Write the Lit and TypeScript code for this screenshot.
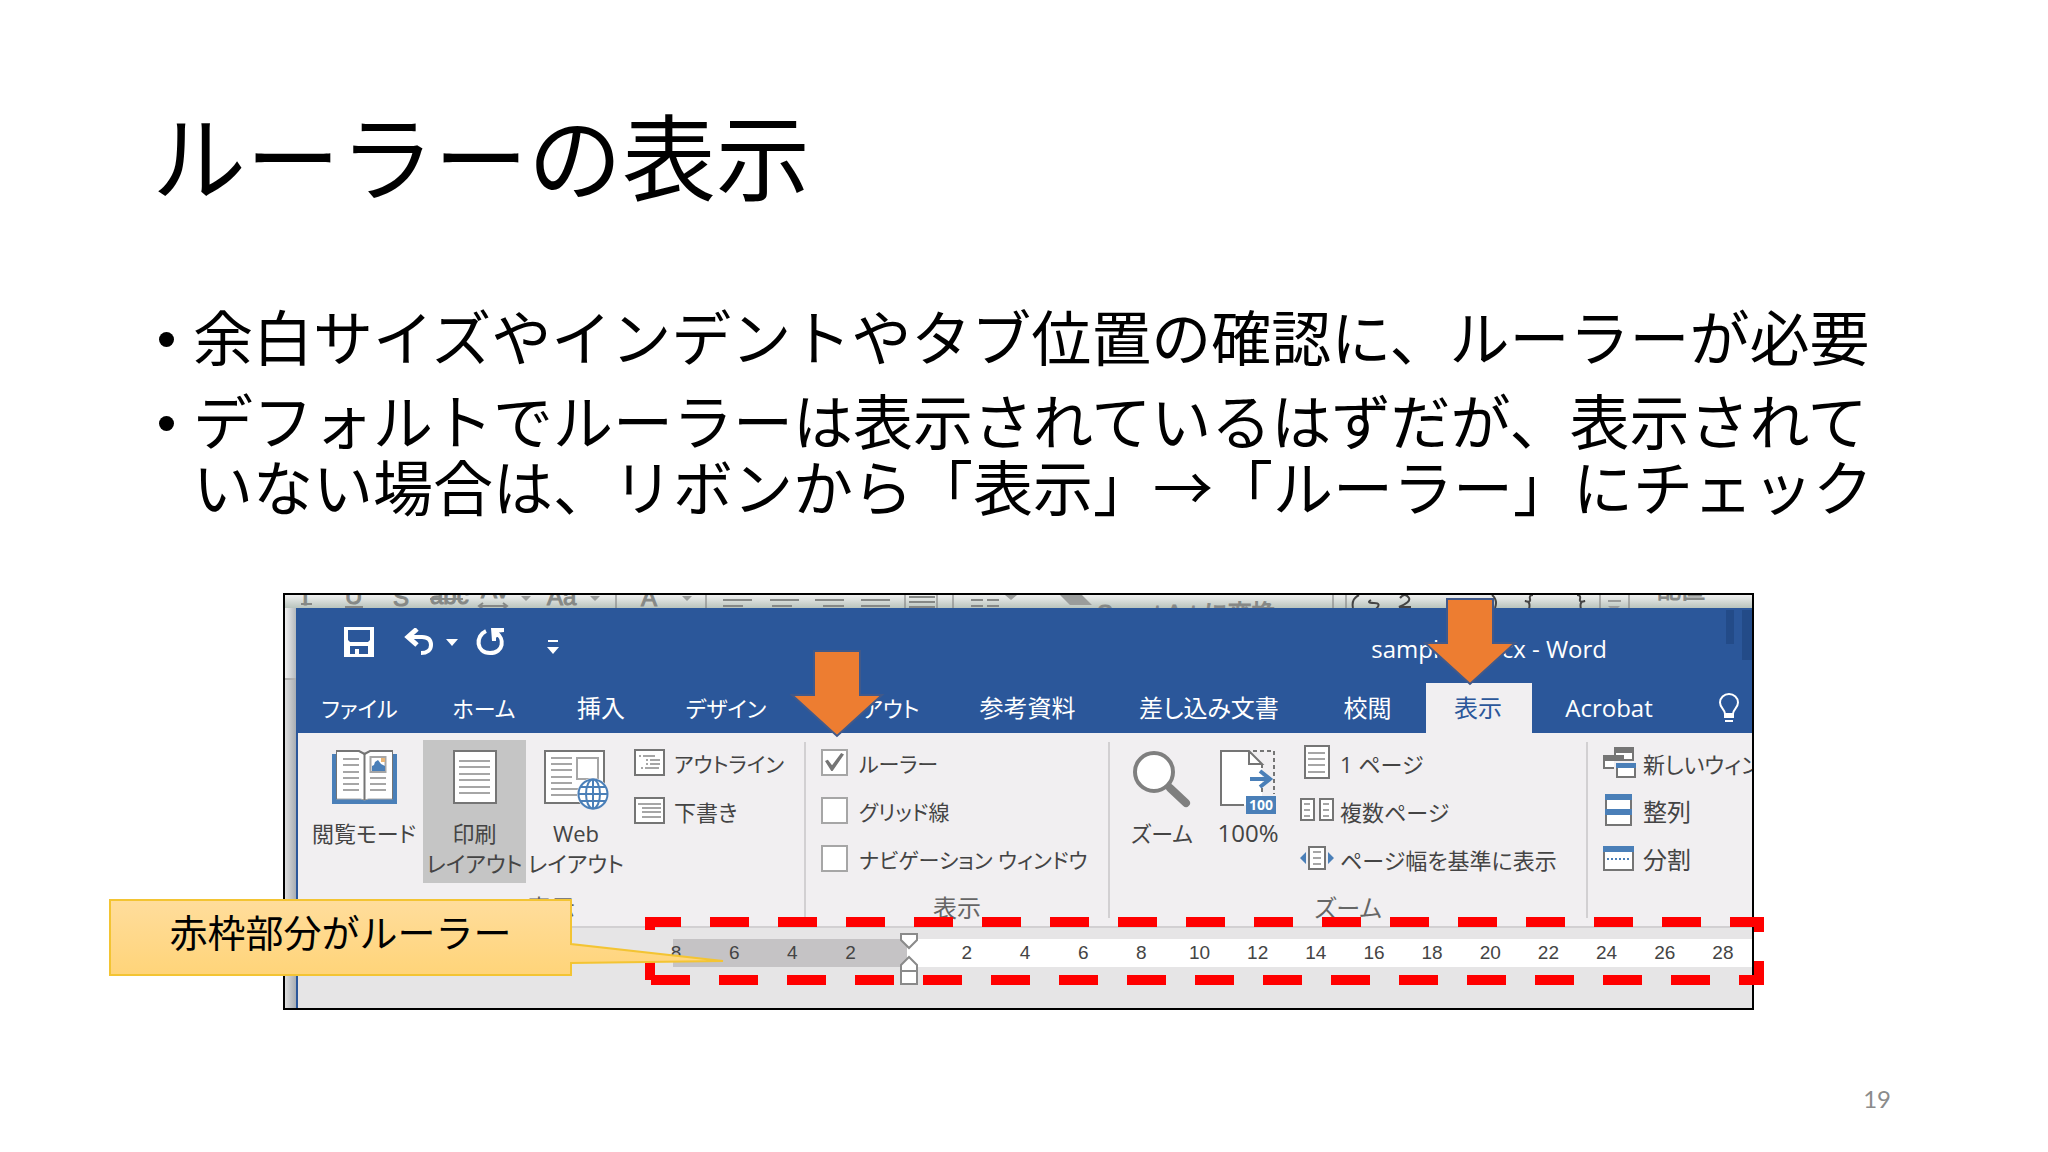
import { LitElement, html, svg, css } from "lit";
import { customElement, property } from "lit/decorators.js";
import { classMap } from "lit/directives/class-map.js";

const G = "#757575";
const L = "#a6a6a6";
const B = "#4a7fb8";

const lines = (x: number, w: number, ys: number[], c = L) =>
  svg`${ys.map((y) => svg`<rect x=${x} y=${y} width=${w} height="2" fill=${c}></rect>`)}`;

const icons: Record<string, unknown> = {
  save: html`<svg width="30" height="30" viewBox="0 0 30 30">
    <path fill="#fff" fill-rule="evenodd" d="M0 0h30v30H0zM4 3v10l2 2h18l2-2V3zM6 19v8h5v-5h4v5h9v-8z"></path></svg>`,
  undo: html`<svg width="30" height="28" viewBox="0 0 30 28">
    <path fill="none" stroke="#fff" stroke-width="4" d="M4 9H18C25 9 27 13 27 17C27 22 23 25 17 25"></path>
    <path fill="none" stroke="#fff" stroke-width="5" d="M13 1L4 9L13 17"></path></svg>`,
  redo: html`<svg width="30" height="28" viewBox="0 0 30 28">
    <path fill="none" stroke="#fff" stroke-width="4" d="M10 3C-1 8 0 25 14 25C28 25 29 10 20 5"></path>
    <path fill="#fff" d="M15 0H28V4L23 4.500L25 8L20 9.500V13H16Z"></path></svg>`,
  caret: html`<svg width="12" height="7" viewBox="0 0 12 7"><path fill="#fff" d="M0 0h12L6 7z"></path></svg>`,
  more: html`<svg width="12" height="14" viewBox="0 0 12 14"><path fill="#fff" d="M1 0h10v2H1zM0 7h12L6 14z"></path></svg>`,
  bulb: html`<svg width="22" height="30" viewBox="0 0 22 30">
    <path fill="none" stroke="#fff" stroke-width="2" d="M7 21C7 16 2 15 2 9.500A9 8.500 0 0 1 20 9.500C20 15 15 16 15 21Z"></path>
    <path fill="#fff" d="M6 22h10v3H6zM7 27h8v2H7z"></path></svg>`,
  book: html`<svg width="65" height="54" viewBox="0 0 65 54">
    <path fill=${B} d="M0 4h65v50H0z"></path>
    <path fill="#fff" stroke=${L} stroke-width="1" d="M4.500 1h23l5 3l5-3h23v48h-24l-4 1l-4-1h-24z"></path>
    <path fill="none" stroke=${G} stroke-width="2" d="M4 1h23l5.500 3l5.500-3h23"></path>
    <path stroke=${G} stroke-width="2" d="M32.500 4v46"></path>
    <path stroke=${G} stroke-width="1" d="M4.500 1v48M60.500 1v48"></path>
    ${lines(11, 16, [8, 14, 21, 27, 33, 39])}${lines(38, 16, [27, 33, 39])}
    <rect x="38.500" y="7" width="15" height="15" fill="#fff" stroke=${L} stroke-width="2"></rect>
    <path fill=${B} d="M40 21v-5l2 -1l1-3l3-2l3 4l4 2v5z"></path><rect x="49" y="8" width="4" height="4" fill="#eab676"></rect></svg>`,
  print: html`<svg width="44" height="54" viewBox="0 0 44 54">
    <rect x="1" y="1" width="42" height="52" fill="#fff" stroke=${G} stroke-width="2"></rect>
    ${lines(6, 31, [10, 16, 23, 29, 36, 42])}</svg>`,
  web: html`<svg width="65" height="60" viewBox="0 0 65 60">
    <rect x="1" y="1" width="59" height="52" fill="#fff" stroke=${G} stroke-width="2"></rect>
    ${lines(7, 21, [7, 13, 19, 26, 32])}${lines(7, 27, [38, 44])}
    <rect x="33" y="8" width="21" height="21" fill="#fff" stroke=${L} stroke-width="2"></rect>
    <circle cx="49" cy="44" r="16" fill="#f1eff1"></circle>
    <g fill="#fff" stroke=${B} stroke-width="2"><circle cx="49" cy="44" r="14.500"></circle>
    <ellipse cx="49" cy="44" rx="7" ry="14.500"></ellipse>
    <path d="M34.500 44H63.500M37 37H61M37 51H61M49 29.500V58.500"></path></g></svg>`,
  outline: html`<svg width="31" height="27" viewBox="0 0 31 27">
    <rect x="1" y="1" width="29" height="25" fill="#fff" stroke=${G} stroke-width="2"></rect>
    <path fill=${L} d="M5 6h2v2H5zM9 6h12v2H9zM12 10h2v2h-2zM16 10h10v2H16zM12 14h2v2h-2zM16 14h10v2H16zM7 18h2v2H7zM11 18h14v2H11z"></path></svg>`,
  draft: html`<svg width="31" height="27" viewBox="0 0 31 27">
    <rect x="1" y="1" width="29" height="25" fill="#fff" stroke=${G} stroke-width="2"></rect>
    ${lines(4, 23, [6])}${lines(8, 19, [10, 14, 19])}</svg>`,
  zoom: html`<svg width="58" height="58" viewBox="0 0 58 58">
    <path stroke="#7f7f7f" stroke-width="8" stroke-linecap="round" d="M37 38L53 53"></path>
    <circle cx="21" cy="22" r="19" fill="#fff" stroke="#7f7f7f" stroke-width="4"></circle></svg>`,
  hundred: html`<svg width="56" height="64" viewBox="0 0 56 64">
    <path fill="#fff" d="M1 1H29L42 14V55H1Z"></path>
    <path fill="none" stroke=${G} stroke-width="2" d="M24 55H1V1H29L42 14H29V1M42 14V18"></path>
    <path fill="none" stroke=${G} stroke-width="2" stroke-dasharray="4 3" d="M33 1H54V44M42 38V44"></path>
    <path fill="none" stroke=${B} stroke-width="4" d="M30 29H50M40 21L50 29L40 37"></path>
    <rect x="26" y="46" width="30" height="18" fill=${B}></rect>
    <text x="41" y="60" class="badge" text-anchor="middle">100</text></svg>`,
  one: html`<svg width="34" height="34" viewBox="0 0 34 34">
    <rect x="5" y="1" width="24" height="32" fill="#fff" stroke=${G} stroke-width="2"></rect>
    ${lines(8, 17, [7, 13, 19, 26])}</svg>`,
  multi: html`<svg width="34" height="24" viewBox="0 0 34 24">
    <g fill="#fff" stroke=${G} stroke-width="2"><rect x="1" y="1" width="13" height="21"></rect><rect x="20" y="1" width="13" height="21"></rect></g>
    ${lines(4, 6, [5, 11, 17])}${lines(23, 6, [5, 11, 17])}</svg>`,
  pagew: html`<svg width="34" height="24" viewBox="0 0 34 24">
    <rect x="9" y="1" width="16" height="22" fill="#fff" stroke=${G} stroke-width="2"></rect>
    ${lines(13, 8, [5, 11, 17])}<path fill=${B} d="M0 12l6-6v12zM34 12l-6-6v12z"></path></svg>`,
  newwin: html`<svg width="34" height="32" viewBox="0 0 34 32">
    <path fill="#fff" stroke=${G} stroke-width="2" d="M12 2h18v12H12z"></path><path fill=${G} d="M11 1h20v6H11z"></path>
    <path fill="#fff" stroke=${G} stroke-width="2" d="M1 11h19v11H1z"></path><path fill=${G} d="M0 9h21v6H0z"></path>
    <path fill="#f1eff1" d="M11 15h23v17H11z"></path><path fill="#fff" stroke=${G} stroke-width="2" d="M14 18h18v13H14z"></path>
    <path fill=${B} d="M13 17h20v5H13z"></path></svg>`,
  tile: html`<svg width="30" height="32" viewBox="0 0 30 32">
    <path fill="#fff" stroke=${G} stroke-width="2" d="M3 1h25v30H3z"></path>
    <path fill=${B} d="M2 0h27v6H2zM2 15h27v6H2z"></path></svg>`,
  split: html`<svg width="31" height="25" viewBox="0 0 31 25">
    <path fill="#fff" stroke=${G} stroke-width="2" d="M1 1h29v23H1z"></path><path fill=${B} d="M0 0h31v6H0z"></path>
    <path stroke=${B} stroke-width="2" stroke-dasharray="2 2" d="M4 13H28"></path></svg>`,
};

const base = css`
  * { box-sizing: border-box; }
  svg { display: block; flex: none; }
  button { font: inherit; color: inherit; background: none; border: 0; padding: 0; margin: 0; text-align: center; white-space: nowrap; }
  .badge { font: bold 14px "Open Sans", sans-serif; fill: #fff; }
`;

@customElement("big-button")
class BigButton extends LitElement {
  @property() icon = "";
  @property({ type: Array }) text: string[] = [];
  @property({ type: Boolean }) pressed = false;
  static styles = [base, css`
    :host { display: block; height: 143px; }
    .big { display: flex; flex-direction: column; align-items: center; width: 100%; height: 100%; line-height: 30px; }
    .pressed { background: #c5c5c5; }
    .pic { display: flex; justify-content: center; height: 78px; padding-top: 10px; }
    .row { height: 30px; }
  `];
  render() {
    return html`<button class=${classMap({ big: true, pressed: this.pressed })} aria-pressed=${this.pressed}>
      <span class="pic">${icons[this.icon]}</span>${this.text.map((t) => html`<span class="row">${t}</span>`)}</button>`;
  }
}

@customElement("small-button")
class SmallButton extends LitElement {
  @property() icon = "";
  @property() text = "";
  static styles = [base, css`
    :host { display: block; }
    .small { display: flex; align-items: center; gap: 6px; height: 48px; line-height: 48px; }
    .pic { display: flex; width: 34px; flex: none; padding-bottom: 4px; }
  `];
  render() {
    return html`<button class="small"><span class="pic">${icons[this.icon]}</span><span>${this.text}</span></button>`;
  }
}

@customElement("word-window")
class WordWindow extends LitElement {
  static styles = [base, css`
    :host {
      display: block; overflow: hidden; border: 2px solid #000; background: #cfcfcf; color: #444;
      font: 22px/30px "Noto Sans", "Noto Sans CJK JP", sans-serif;
    }
    .ui { font-family: "Open Sans", "Noto Sans CJK JP", sans-serif; font-feature-settings: "palt"; }
    .behind { height: 13px; overflow: hidden; background: linear-gradient(#f0f0f0, #b9c4bd); }
    .behind text { font: 24px "Liberation Sans", "Noto Sans CJK JP", sans-serif; fill: #858886; stroke: #858886; stroke-width: 1px; }
    .body { display: flex; }
    .edge { width: 11px; flex: none; background: linear-gradient(90deg, #dedede, #a8adb3); }
    .edge-top { height: 72px; background: linear-gradient(90deg, #f0f0f0, #b4b9bd); border-bottom: 2px solid #b0b0b0; }
    .win { flex: 1; min-width: 0; border-left: 2px solid #2b579a; background: #e6e5e6; }
    .titlebar { display: flex; height: 75px; background: #2b579a; color: #fff; }
    .quick { display: flex; align-items: center; height: 68px; padding-left: 46px; }
    .quick button { display: block; }
    .undo { margin-left: 30px; }
    .caret { margin-left: 12px; }
    .redo { margin-left: 18px; }
    .more { margin: 10px 0 0 41px; }
    .doc { margin: 0 118px 0 auto; font-size: 24px; line-height: 82px; white-space: nowrap; }
    .tabs { display: grid; grid-template-columns: 125px 124px 110px 140px 151px 161px 202px 115px 106px 156px 1fr;
      height: 50px; background: #2b579a; color: #fff; line-height: 46px; font-size: 24px; }
    .tabs button { padding-right: 2px; }
    .tabs .kana { font-size: 22px; }
    .tabs .active { background: #f1eff1; color: #2b579a; }
    .tabs .tell { display: flex; align-items: center; padding-left: 30px; }
    .ribbon { display: flex; background: #f1eff1; border-bottom: 2px solid #d2d0d2; }
    .sep { width: 2px; flex: none; margin: 9px 0 8px; background: #d2d0d2; }
    .group { flex: none; padding-top: 7px; }
    .items { display: flex; height: 150px; }
    .name { margin: 0; line-height: 36px; text-align: center; font-size: 24px; color: #666; }
    .views { width: 506px; }
    .views .items { padding-left: 7px; }
    .show { width: 302px; }
    .show .items { padding-left: 15px; }
    .zoom { width: 476px; }
    .zoom .items { padding-left: 10px; }
    .arrange { flex: 1; min-width: 0; }
    .arrange .items { padding-left: 15px; }
    .w118 { width: 118px; } .w103 { width: 103px; } .w100 { width: 100px; } .w88 { width: 88px; } .w84 { width: 84px; }
    .kanji { font-size: 24px; }
    .narrow { font-size: 21px; }
    .col { margin-left: 8px; }
    .check { display: flex; align-items: center; gap: 11px; height: 48px; white-space: nowrap; font-size: 21px; }
    .check input { appearance: none; display: grid; place-items: center; width: 27px; height: 27px; margin: 0 0 4px; flex: none; background: #fff; border: 2px solid #a6a6a6; }
    .check input:checked::after { content: ""; width: 19px; height: 18px; background: #757575; clip-path: polygon(0 45%, 15% 38%, 37% 68%, 85% 0, 100% 8%, 40% 100%, 33% 100%); }
    .ruler { display: grid; grid-template-rows: 28px; padding-top: 11px; height: 80px; }
    .track { grid-area: 1 / 1; margin-left: 375px; background: linear-gradient(90deg, #c5c3c5 234px, #fff 234px); }
    .marks { grid-area: 1 / 1; margin-left: 349px; display: flex; font: 19px/28px "Liberation Sans", sans-serif; }
    .marks span { flex: 1 1 0; min-width: 0; display: flex; justify-content: center; }
    .marks svg { margin-top: -6px; }
  `];
  render() {
    const tabs = ["ファイル", "ホーム", "挿入", "デザイン", "レイアウト", "参考資料", "差し込み文書", "校閲", "表示", "Acrobat"];
    const ticks = Array.from({ length: 19 }, (_, i) => i * 2 - 8);
    return html`
      <div class="behind" aria-hidden="true"><svg width="1468" height="13" viewBox="0 0 1468 13">
        <text x="17" y="10" font-style="italic">I</text><text x="60" y="9">U</text><text x="108" y="11">S</text>
        <text x="145" y="9">abc</text><text x="196" y="3">Av</text><text x="262" y="10">Aa</text><text x="356" y="11">A</text>
        <g stroke="#858886" stroke-width="2" fill="none">
          <path d="M16 9H27M60 12H78M145 4H178M194 11H222M198 8l-4 3l4 3M218 8l4 3l-4 3"></path>
          <path d="M438 5H467M438 11H458M485 5H514M487 11H507M530 5H559M538 11H559M576 5H605M576 11H605M624 2H650M624 7H650M624 12H650M686 5H698M702 5H714M686 11H698M702 11H714"></path>
          <path stroke="#777" stroke-width="1" d="M331 0V13M421 0V13M620 0V13M652 0V13M668 0V13M1048 0V13M1061 0V13M1315 0V13M1344 0V13"></path>
          <path stroke="#444" d="M1074 0q-8 4 -6 13M1086 5q-5 3 3 3t2 6M1115 3q5 -6 9 0q2 4 -10 9h12M1207 0q6 5 3 13M1248 0q-4 0 -3 4t-5 2q6 0 4 8M1292 0q4 0 3 4t5 2q-6 0 -4 8"></path>
        </g>
        <path fill="#9a9c9b" d="M236 1h10l-5 5zM305 1h10l-5 5zM397 1h10l-5 5zM720 0h12l-6 5zM775 0h22l10 10h-22zM1323 11h12l-6 6zM1323 5h13v2h-13z"></path>
        <text x="812" y="27">Smart Art に変換</text><text x="1372" y="3">配置</text></svg></div>
      <div class="body ui">
        <div class="edge"><div class="edge-top"></div></div>
        <div class="win">
          <header class="titlebar">
            <div class="quick">
              <button aria-label="上書き保存">${icons.save}</button>
              <button class="undo" aria-label="元に戻す">${icons.undo}</button>
              <button class="caret" aria-label="元に戻す一覧">${icons.caret}</button>
              <button class="redo" aria-label="繰り返し">${icons.redo}</button>
              <button class="more" aria-label="クイック アクセスのカスタマイズ">${icons.more}</button>
            </div>
            <span class="doc">sample1.docx - Word</span>
            <svg width="27" height="54" viewBox="0 0 27 54"><path fill="#234b88" d="M1 2h8v34H1zM17 2h10v50H17z"></path></svg>
          </header>
          <nav class="tabs">
            ${tabs.map((t) => html`<button class=${classMap({ active: t === "表示", kana: /^[ァ-ー]+$/.test(t) })}>${t}</button>`)}
            <button class="tell" aria-label="操作アシスト">${icons.bulb}</button>
          </nav>
          <div class="ribbon">
            <section class="group views">
              <div class="items">
                <big-button class="w118" icon="book" .text=${["閲覧モード"]}></big-button>
                <big-button class="w103" icon="print" .text=${["印刷", "レイアウト"]} pressed></big-button>
                <big-button class="w100" icon="web" .text=${["Web", "レイアウト"]}></big-button>
                <div class="col">
                  <small-button class="narrow" icon="outline" text="アウトライン"></small-button>
                  <small-button icon="draft" text="下書き"></small-button>
                </div>
              </div>
              <p class="name">表示</p>
            </section>
            <div class="sep"></div>
            <section class="group show">
              <div class="items"><div>
                <label class="check"><input type="checkbox" checked>ルーラー</label>
                <label class="check"><input type="checkbox">グリッド線</label>
                <label class="check"><input type="checkbox">ナビゲーション ウィンドウ</label>
              </div></div>
              <p class="name">表示</p>
            </section>
            <div class="sep"></div>
            <section class="group zoom">
              <div class="items">
                <big-button class="w84" icon="zoom" .text=${["ズーム"]}></big-button>
                <big-button class="w88 kanji" icon="hundred" .text=${["100%"]}></big-button>
                <div class="col">
                  <small-button icon="one" text="1 ページ"></small-button>
                  <small-button icon="multi" text="複数ページ"></small-button>
                  <small-button icon="pagew" text="ページ幅を基準に表示"></small-button>
                </div>
              </div>
              <p class="name">ズーム</p>
            </section>
            <div class="sep"></div>
            <section class="group arrange">
              <div class="items"><div>
                <small-button icon="newwin" text="新しいウィンドウを開く"></small-button>
                <small-button class="kanji" icon="tile" text="整列"></small-button>
                <small-button class="kanji" icon="split" text="分割"></small-button>
              </div></div>
            </section>
          </div>
          <div class="ruler">
            <div class="track"></div>
            <div class="marks">${ticks.map((n) => html`<span>${n === 0
              ? html`<svg width="18" height="52" viewBox="0 0 18 52"><g fill="#fff" stroke="#8a8a8a" stroke-width="2">
                  <path d="M1 1H17V7L9 15L1 7Z"></path><path d="M9 24L17 32V51H1V32ZM1 38H17"></path></g></svg>`
              : Math.abs(n)}</span>`)}</div>
          </div>
        </div>
      </div>`;
  }
}

@customElement("app-root")
class AppRoot extends LitElement {
  static styles = [base, css`
    :host { display: block; }
    .slide { display: flex; flex-direction: column; min-height: 100vh; padding: 93px 157px 30px 152px; background: #fff; color: #000;
      font-family: "Noto Sans CJK JP", sans-serif; font-weight: 400; }
    h1 { margin: 0 0 89px; font-size: 94px; line-height: 120px; font-weight: 400; }
    ul { margin: 0; padding: 0 0 0 5px; list-style: none; font-size: 60px; line-height: 66px; }
    li { display: grid; grid-template-columns: 36px 1fr; margin-bottom: 18px; }
    li::before { content: ""; width: 15px; height: 15px; margin: 30px 0 0 2px; border-radius: 50%; background: #000; }
    li span { margin-right: -30px; }
    .figure { position: relative; margin: 57px 137px 0 131px; }
    .over { position: absolute; pointer-events: none; overflow: visible; }
    .frame { left: 362px; top: 324px; }
    .arrow-a { left: 508px; top: 57px; }
    .arrow-b { left: 1141px; top: 5px; }
    .callout { left: -174px; top: 306px; width: 463px; height: 77px; margin: 0; padding-top: 2px; text-align: center; font-size: 38px; line-height: 60px; }
    .callout svg { position: absolute; left: 0; top: 0; }
    .callout span { position: relative; }
    .page { margin: auto 0 0; text-align: right; font: 24px/46px Lato, sans-serif; color: #8b8b8b; }
  `];
  arrow(cls: string) {
    return html`<svg class="over ${cls}" width="92" height="88" viewBox="0 0 92 88">
      <path fill="#ed7d31" stroke="#41598a" stroke-width="2" d="M23 1H69V45H91L46 86L1 45H23Z"></path></svg>`;
  }
  render() {
    return html`<main class="slide">
      <h1>ルーラーの表示</h1>
      <ul>
        <li><span>余白サイズやインデントやタブ位置の確認に、ルーラーが必要</span></li>
        <li><span>デフォルトでルーラーは表示されているはずだが、表示されて<br>いない場合は、リボンから「表示」→「ルーラー」にチェック</span></li>
      </ul>
      <div class="figure">
        <word-window></word-window>
        <svg class="over frame" width="1120" height="68" viewBox="0 0 1120 68">
          <g fill="none" stroke="#f00" stroke-width="10">
            <path stroke-dasharray="39 29" d="M5 13V5H1114V63H5"></path><path d="M5 45V63"></path></g></svg>
        ${this.arrow("arrow-a")}${this.arrow("arrow-b")}
        <p class="over callout"><svg width="616" height="77" viewBox="0 0 616 77">
          <defs><linearGradient id="fill" x2="0" y2="1"><stop stop-color="#ffdd9c"></stop><stop offset="1" stop-color="#ffd479"></stop></linearGradient></defs>
          <path fill="url(#fill)" stroke="#f3c433" stroke-width="2" d="M1 1H462V45L614 62L462 64V76H1Z"></path></svg>
          <span>赤枠部分がルーラー</span></p>
      </div>
      <p class="page">19</p>
    </main>`;
  }
}
